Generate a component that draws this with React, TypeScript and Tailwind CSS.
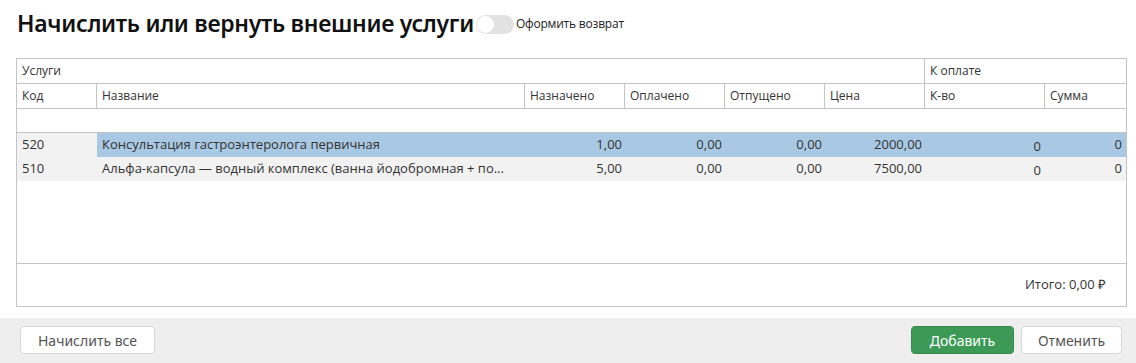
import React from 'react';

const cols = 'grid grid-cols-[80px_428px_100px_100px_100px_100px_120px_81px]';

const headers = ['Код', 'Название', 'Назначено', 'Оплачено', 'Отпущено', 'Цена', 'К-во', 'Сумма'];

const rows = [
  {
    code: '520',
    name: 'Консультация гастроэнтеролога первичная',
    assigned: '1,00',
    paid: '0,00',
    released: '0,00',
    price: '2000,00',
    qty: '0',
    sum: '0',
    selected: true,
  },
  {
    code: '510',
    name: 'Альфа-капсула — водный комплекс (ванна йодобромная + по...',
    assigned: '5,00',
    paid: '0,00',
    released: '0,00',
    price: '7500,00',
    qty: '0',
    sum: '0',
    selected: false,
  },
];

const Toggle: React.FC = () => (
  <div className="flex items-center gap-[2px] ml-[2px] mt-[2px]">
    <div className="w-[38px] h-[19px] rounded-full bg-[#e2e2e2] p-[1px] flex items-center">
      <div className="w-[17px] h-[17px] rounded-full bg-white" />
    </div>
    <span className="text-[12px] text-[#222] tracking-[-0.2px]">Оформить возврат</span>
  </div>
);

export default function App() {
  return (
    <div className="w-[1136px] h-[363px] bg-white flex flex-col text-[#333] font-['Open_Sans',sans-serif]">
      <div className="h-[47px] flex items-center pl-[17px] pb-[1px]">
        <h1 className="text-[23px] font-semibold text-[#111] tracking-[-0.3px] font-['Noto_Sans',sans-serif]">
          Начислить или вернуть внешние услуги
        </h1>
        <Toggle />
      </div>

      <div className="ml-[16px] mt-[11px] w-[1111px] h-[249px] border border-[#c4c4c4] flex flex-col text-[13px]">
        <div className={`${cols} h-[25px] border-b border-[#c4c4c4]`}>
          <div className="col-span-6 border-r border-[#c4c4c4] px-[5px] flex items-center text-[12px]">Услуги</div>
          <div className="col-span-2 px-[5px] flex items-center text-[12px]">К оплате</div>
        </div>
        <div className={`${cols} h-[25px] border-b border-[#c4c4c4]`}>
          {headers.map((h, i) => (
            <div
              key={h}
              className={`px-[5px] flex items-center text-[12px] ${i < headers.length - 1 ? 'border-r border-[#c4c4c4]' : ''}`}
            >
              {h}
            </div>
          ))}
        </div>
        <div className="h-[24px] border-b border-[#c4c4c4]" />
        {rows.map((r) => (
          <div key={r.code} className={`${cols} h-[24px] bg-[#f2f2f2]`}>
            <div className="px-[5px] flex items-center">{r.code}</div>
            <div className={`px-[5px] flex items-center whitespace-nowrap overflow-hidden ${r.selected ? 'bg-[#a9c8e4]' : ''}`}>
              {r.name}
            </div>
            {[r.assigned, r.paid, r.released, r.price].map((v, i) => (
              <div key={i} className={`px-[3px] flex items-center justify-end ${r.selected ? 'bg-[#a9c8e4]' : ''}`}>
                {v}
              </div>
            ))}
            <div className={`pr-[4px] pt-[3px] flex items-center justify-end ${r.selected ? 'bg-[#a9c8e4]' : ''}`}>{r.qty}</div>
            <div className={`pr-[4px] flex items-center justify-end ${r.selected ? 'bg-[#a9c8e4]' : ''}`}>{r.sum}</div>
          </div>
        ))}
        <div className="flex-1 border-b border-[#c4c4c4]" />
        <div className="h-[42px] flex items-center justify-end pr-[20px] text-[13px]">Итого: 0,00 ₽</div>
      </div>

      <div className="mt-[11px] flex-1 bg-[#eeeeee] flex items-center justify-between pl-[20px] pr-[14px] pb-[1px]">
        <button className="w-[135px] h-[28px] bg-white border border-[#d6d6d6] rounded-[4px] text-[14px] text-[#555] font-['Noto_Sans',sans-serif]">
          Начислить все
        </button>
        <div className="flex gap-[7px]">
          <button className="w-[103px] h-[28px] bg-[#3d9a56] border border-[#368a4c] rounded-[4px] text-[14px] text-white font-['Noto_Sans',sans-serif]">
            Добавить
          </button>
          <button className="w-[101px] h-[28px] bg-white border border-[#d6d6d6] rounded-[4px] text-[14px] text-[#555] font-['Noto_Sans',sans-serif]">
            Отменить
          </button>
        </div>
      </div>
    </div>
  );
}
